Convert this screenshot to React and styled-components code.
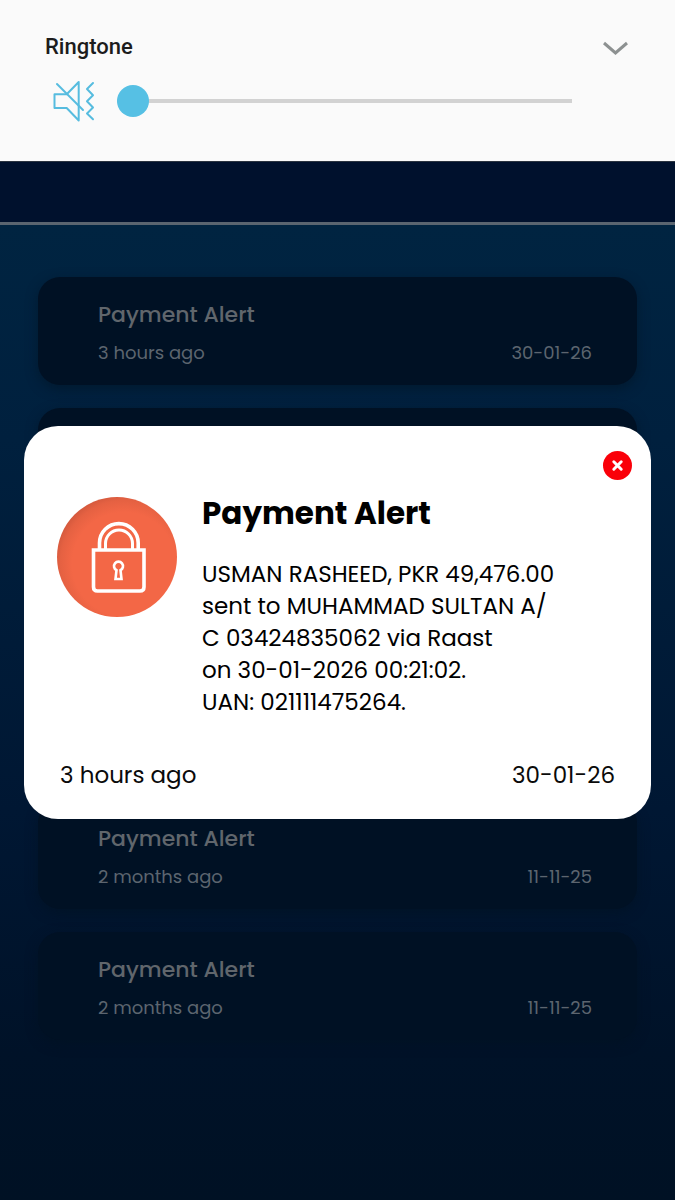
import React, { useState } from 'react'
import styled, { createGlobalStyle } from 'styled-components'

const GlobalStyle = createGlobalStyle`
  * { box-sizing: border-box; }
  body {
    margin: 0;
    background: #001123;
    font-family: Poppins, Inter, "Open Sans", sans-serif;
  }
  h1, h2, p, ul { margin: 0; padding: 0; }
`

const Screen = styled.div`
  position: relative;
  display: flex;
  flex-direction: column;
  min-height: 100vh;
`

const VolumePanel = styled.section`
  display: flex;
  flex-direction: column;
  gap: 16px;
  padding: 33px 45px 36px;
  background: #fafafa;
  border-bottom: 1px solid #2b3440;
`

const VolumeHead = styled.div`
  display: flex;
  align-items: center;
  justify-content: space-between;
`

const VolumeLabel = styled.label`
  font: 500 22px/28px Roboto, sans-serif;
  color: #1c1c1c;
`

const IconButton = styled.button`
  display: flex;
  padding: 0;
  border: 0;
  background: none;
  cursor: pointer;
`

const VolumeRow = styled.div`
  display: flex;
  align-items: center;
  gap: 21px;
  height: 48px;
  padding: 0 58px 0 7px;
`

const Slider = styled.input`
  appearance: none;
  flex: 1;
  min-width: 0;
  height: 32px;
  margin: 0;
  background: none;

  &::-webkit-slider-runnable-track {
    height: 4px;
    background: #d2d2d2;
  }
  &::-webkit-slider-thumb {
    appearance: none;
    width: 32px;
    height: 32px;
    margin-top: -14px;
    border-radius: 50%;
    background: #56c0e4;
  }
`

const TopBar = styled.header`
  height: 63px;
  background: #00112d;
  border-bottom: 3px solid #5a6570;
`

const Main = styled.main`
  flex: 1;
  padding: 52px 38px;
  background: linear-gradient(#002441, #00203e 22%, #001733 60%, #001228 85%, #001124);
`

const List = styled.ul`
  display: flex;
  flex-direction: column;
  gap: 23px;
  list-style: none;
`

const Card = styled.li`
  display: flex;
  flex-direction: column;
  gap: 8px;
  min-height: 108px;
  padding: 22px 45px 0 60px;
  border-radius: 22px;
  background: #001124;
  box-shadow: 0 4px 12px rgba(0, 17, 32, 0.5);
`

const CardTitle = styled.h2`
  font-size: 22px;
  line-height: 32px;
  font-weight: 500;
  color: #60666c;
`

const Meta = styled.div`
  display: flex;
  justify-content: space-between;
  font-size: ${p => (p.$large ? 23 : 18)}px;
  line-height: ${p => (p.$large ? 32 : 28)}px;
  color: ${p => (p.$large ? '#0a0a0a' : '#5c656f')};
`

const DialogLayer = styled.div`
  position: absolute;
  inset: 0;
  display: flex;
  align-items: center;
  padding: 45px 24px 0;
`

const Dialog = styled.section`
  display: flex;
  flex-direction: column;
  flex: 1;
  padding: 25px 36px 28px 33px;
  border-radius: 34px;
  background: #fff;
  color: #000;

  > ${Meta} { padding-left: 3px; margin-top: 41px; }
`

const CloseButton = styled(IconButton)`
  align-self: flex-end;
  margin-right: -17px;
`

const DialogBody = styled.div`
  display: flex;
  gap: 25px;
  margin-top: 17px;
`

const DialogText = styled.div`
  flex: 1;
  min-width: 0;
`

const DialogTitle = styled.h1`
  font-size: 31px;
  line-height: 32px;
  font-weight: 700;
`

const Message = styled.p`
  margin-top: 29px;
  font-size: 23px;
  line-height: 32px;
`

const LockIcon = styled.svg`
  flex: none;
`

const alerts = [
  { id: 1, title: 'Payment Alert', age: '3 hours ago', date: '30-01-26' },
  { id: 2 },
  { id: 3 },
  { id: 4 },
  { id: 5, title: 'Payment Alert', age: '2 months ago', date: '11-11-25' },
  { id: 6, title: 'Payment Alert', age: '2 months ago', date: '11-11-25' },
]

const message = [
  'USMAN RASHEED, PKR 49,476.00',
  'sent to MUHAMMAD SULTAN A/',
  'C 03424835062 via Raast',
  'on 30-01-2026 00:21:02.',
  'UAN: 021111475264.',
]

function Muted() {
  return (
    <svg width="44" height="44" viewBox="0 0 44 44" fill="none" stroke="#56bcdf" strokeWidth="2" strokeLinecap="round" strokeLinejoin="round">
      <path d="M2.5 15.3H14.7L26.7 3V41.5L14.7 29H2.5Z" />
      <path d="M5 5L31 31" />
      <path d="M41 4L35 10L41 16.3L35 22.3L41 28.5L35 34.5L41 40.3" />
    </svg>
  )
}

function Lock() {
  return (
    <LockIcon width="120" height="120" viewBox="0 0 120 120" fill="none" stroke="#fff" aria-hidden="true">
      <defs>
        <radialGradient id="shade" cx="67" cy="67" r="74" gradientUnits="userSpaceOnUse">
          <stop offset="0.7" stopColor="#f36746" />
          <stop offset="0.86" stopColor="#e56142" />
          <stop offset="1" stopColor="#c9543a" />
        </radialGradient>
      </defs>
      <circle cx="60" cy="60" r="60" fill="url(#shade)" stroke="none" />
      <path d="M36.5 53H87V90Q87 94 83 94H40.5Q36.5 94 36.5 90Z" strokeWidth="3.6" />
      <path d="M42.5 52V46A19.3 19.3 0 0 1 81.2 46V52" strokeWidth="3.6" />
      <path d="M48.5 52V46.5A13.5 13.5 0 0 1 75.5 46.5V52" strokeWidth="3" />
      <path d="M59.5 73.2A4.5 4.5 0 1 1 63.5 73.2L64.5 82H58.5Z" strokeWidth="2.6" />
    </LockIcon>
  )
}

export default function App() {
  const [open, setOpen] = useState(true)
  const [volume, setVolume] = useState(0)

  return (
    <Screen>
      <GlobalStyle />
      <VolumePanel>
        <VolumeHead>
          <VolumeLabel htmlFor="ringtone">Ringtone</VolumeLabel>
          <IconButton type="button" aria-label="Show more volume controls">
            <svg width="30" height="28" viewBox="0 0 30 28" fill="none" stroke="#8d9191" strokeWidth="3">
              <path d="M4 10L15.5 20L27 10" />
            </svg>
          </IconButton>
        </VolumeHead>
        <VolumeRow>
          <Muted />
          <Slider id="ringtone" type="range" min="0" max="15" value={volume} onChange={e => setVolume(e.target.value)} />
        </VolumeRow>
      </VolumePanel>
      <TopBar />
      <Main>
        <List>
          {alerts.map(item => (
            <Card key={item.id}>
              {item.title && <CardTitle>{item.title}</CardTitle>}
              {item.age && <Meta><span>{item.age}</span><span>{item.date}</span></Meta>}
            </Card>
          ))}
        </List>
      </Main>
      {open && (
        <DialogLayer>
          <Dialog role="dialog" aria-labelledby="alert-title">
            <CloseButton type="button" aria-label="Close" onClick={() => setOpen(false)}>
              <svg width="29" height="29" viewBox="0 0 29 29">
                <circle cx="14.5" cy="14.5" r="14.5" fill="#fa0009" />
                <path d="M10.8 10.8L18.2 18.2M18.2 10.8L10.8 18.2" stroke="#fff" strokeWidth="3" strokeLinecap="round" />
              </svg>
            </CloseButton>
            <DialogBody>
              <Lock />
              <DialogText>
                <DialogTitle id="alert-title">Payment Alert</DialogTitle>
                <Message>
                  {message.map(line => <React.Fragment key={line}>{line}<br /></React.Fragment>)}
                </Message>
              </DialogText>
            </DialogBody>
            <Meta $large><span>3 hours ago</span><span>30-01-26</span></Meta>
          </Dialog>
        </DialogLayer>
      )}
    </Screen>
  )
}
